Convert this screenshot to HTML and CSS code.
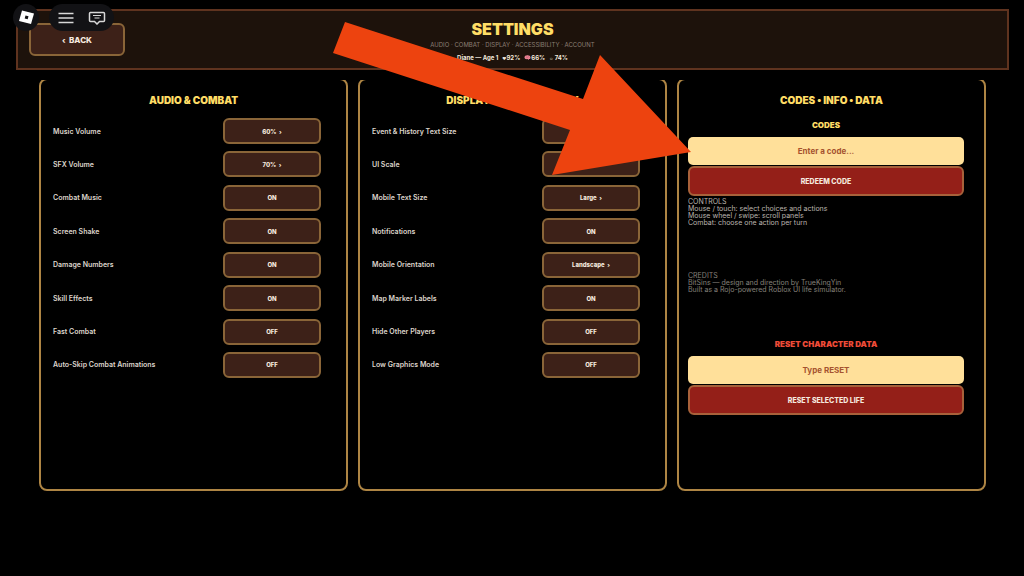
FILE: index.html
```html
<!DOCTYPE html>
<html lang="en">
  <head>
    <meta charset="UTF-8" />
    <meta name="viewport" content="width=device-width, initial-scale=1.0" />
    <title>Settings</title>
    <link rel="stylesheet" href="styles.css">
  </head>
  <body>
    <header class="header">
      <button class="button back" type="button">‹&nbsp; BACK</button>
      <div class="header-text">
        <h1>SETTINGS</h1>
        <p class="subtitle">AUDIO · COMBAT · DISPLAY · ACCESSIBILITY · ACCOUNT</p>
        <p class="status">
          <span>Diane — Age 1</span>
          <span><span class="symbol">♥</span>92%</span>
          <span><svg class="brain" viewBox="0 0 14 10" aria-hidden="true"><path d="M1 5C1 2 3 1 5 1c3-1 8 0 8 4 0 2-1 3-3 3L9 10 7 8C3 9 1 7 1 5z" fill="#f08a9b"/><path d="M3 4c2-1 3 1 4 0s3-1 4 1M4 6c2 0 3-1 5 0" fill="none" stroke="#b94b63"/></svg>66%</span>
          <span><span class="symbol">☺</span> 74%</span>
        </p>
      </div>
    </header>

    <main class="panels">
      <section class="panel">
        <h2>AUDIO &amp; COMBAT</h2>
        <div class="settings">
          <div class="row"><label for="music">Music Volume</label><button class="button" id="music" type="button">60% &nbsp;›</button></div>
          <div class="row"><label for="sfx">SFX Volume</label><button class="button" id="sfx" type="button">70% &nbsp;›</button></div>
          <div class="row"><label for="combatMusic">Combat Music</label><button class="button" id="combatMusic" type="button">ON</button></div>
          <div class="row"><label for="shake">Screen Shake</label><button class="button" id="shake" type="button">ON</button></div>
          <div class="row"><label for="damage">Damage Numbers</label><button class="button" id="damage" type="button">ON</button></div>
          <div class="row"><label for="skill">Skill Effects</label><button class="button" id="skill" type="button">ON</button></div>
          <div class="row"><label for="fast">Fast Combat</label><button class="button" id="fast" type="button">OFF</button></div>
          <div class="row"><label for="autoSkip">Auto-Skip Combat Animations</label><button class="button" id="autoSkip" type="button">OFF</button></div>
        </div>
      </section>

      <section class="panel">
        <h2>DISPLAY &amp; ACCESSIBILITY</h2>
        <div class="settings">
          <div class="row"><label for="textSize">Event &amp; History Text Size</label><button class="button" id="textSize" type="button"></button></div>
          <div class="row"><label for="uiScale">UI Scale</label><button class="button" id="uiScale" type="button"></button></div>
          <div class="row"><label for="mobileText">Mobile Text Size</label><button class="button" id="mobileText" type="button">Large &nbsp;›</button></div>
          <div class="row"><label for="notifications">Notifications</label><button class="button" id="notifications" type="button">ON</button></div>
          <div class="row"><label for="orientation">Mobile Orientation</label><button class="button" id="orientation" type="button">Landscape &nbsp;›</button></div>
          <div class="row"><label for="markers">Map Marker Labels</label><button class="button" id="markers" type="button">ON</button></div>
          <div class="row"><label for="hidePlayers">Hide Other Players</label><button class="button" id="hidePlayers" type="button">OFF</button></div>
          <div class="row"><label for="lowGraphics">Low Graphics Mode</label><button class="button" id="lowGraphics" type="button">OFF</button></div>
        </div>
      </section>

      <section class="panel data">
        <h2>CODES • INFO • DATA</h2>
        <form class="form">
          <h3><label for="code">CODES</label></h3>
          <input type="text" id="code" placeholder="Enter a code..." />
          <button class="button danger" type="button">REDEEM CODE</button>
        </form>
        <div class="info">
          <p>CONTROLS</p>
          <p>Mouse / touch: select choices and actions</p>
          <p>Mouse wheel / swipe: scroll panels</p>
          <p>Combat: choose one action per turn</p>
        </div>
        <div class="info credits">
          <p>CREDITS</p>
          <p>BitSins — design and direction by TrueKingYin</p>
          <p>Built as a Rojo-powered Roblox UI life simulator.</p>
        </div>
        <form class="form">
          <h3 class="warning"><label for="reset">RESET CHARACTER DATA</label></h3>
          <input type="text" id="reset" placeholder="Type RESET" />
          <button class="button danger" type="button">RESET SELECTED LIFE</button>
        </form>
      </section>
    </main>

    <!-- Roblox top bar -->
    <nav class="topbar">
      <button class="logo" type="button" aria-label="Roblox">
        <svg width="26" height="26" viewBox="0 0 26 26"><path d="M9 6.500 21 9.500 18 20 6 17z" fill="#fff"/><path d="M12.500 11.500 15.500 12.200 14.700 15.200 11.700 14.500z" fill="#121215"/></svg>
      </button>
      <div class="menu">
        <button type="button" aria-label="Menu">
          <svg width="18" height="14" viewBox="0 0 18 14"><path d="M1.500 2.500h15M1.500 7h15M1.500 11.500h15" stroke="#d8d8d8" stroke-width="1.300"/></svg>
        </button>
        <button type="button" aria-label="Chat">
          <svg width="18" height="14" viewBox="0 0 18 14"><path d="M2 1.500h13.500q1 0 1 1v7q0 1-1 1H11.500L9 13 6.500 10.500H2.500q-1 0-1-1v-7q0-1 1-1z" fill="none" stroke="#d8d8d8" stroke-width="1.500"/><path d="M5 4.500h8M6.500 7h5" stroke="#d8d8d8" stroke-width="1.200"/></svg>
        </button>
      </div>
    </nav>

    <svg class="arrow" width="360" height="156" viewBox="0 0 360 156" aria-hidden="true">
      <path d="M12 2 250 79 267 35 358 132 219 155 237 110 0 33z" fill="#ed430f"/>
    </svg>
  </body>
</html>
```

FILE: styles.css
```css
* {
  box-sizing: border-box;
}
body {
  margin: 0;
  min-height: 100vh;
  padding: 9px 15px 0 16px;
  background-color: #000;
  color: #ddd5cc;
  font-family: Inter, "Noto Sans", sans-serif;
  font-size: 7px;
  overflow: hidden;
}
h1,
h2,
h3,
p {
  margin: 0;
}
button,
input {
  font-family: inherit;
}
.header {
  display: grid;
  grid-template-columns: 96px 1fr 96px;
  align-items: start;
  height: 61px;
  padding: 12px 11px 0;
  border: 2px solid #5f331f;
  background-color: #1d120b;
}
.header-text {
  text-align: center;
}
h1 {
  color: #ffdd66;
  font-size: 16px;
  font-weight: 900;
  line-height: 12px;
}
.subtitle {
  padding-top: 4px;
  color: #8c7f74;
  font-size: 6px;
  line-height: 12px;
}
.status {
  display: flex;
  justify-content: center;
  gap: 4px;
  color: #f3e8dc;
  font-size: 6px;
  font-weight: 700;
  line-height: 14px;
}
.symbol {
  font-size: 4px;
}
.brain {
  width: 7px;
  height: 5px;
}
.button {
  height: 26px;
  padding: 0;
  border: 2px solid #8a6538;
  border-radius: 6px;
  background-color: #3d2118;
  color: #f5e9df;
  font-size: 6px;
  font-weight: 800;
  cursor: pointer;
}
.button.back {
  height: 33px;
  font-size: 8px;
}
.panels {
  display: grid;
  grid-template-columns: repeat(3, 1fr);
  gap: 10px;
  margin-top: 10px;
  padding: 0 23px;
  overflow: hidden;
}
/* the scroll area cuts off the top edge of each panel */
.panel {
  height: 413px;
  margin-top: -2px;
  padding: 13px 25px 0 12px;
  border: 2px solid #ae8544;
  border-radius: 8px;
}
h2 {
  margin-right: -13px;
  color: #ffdd66;
  font-size: 10px;
  font-weight: 900;
  line-height: 14px;
  text-align: center;
}
.settings {
  display: flex;
  flex-direction: column;
  justify-content: space-between;
  height: 260px;
  margin-top: 11px;
}
.row {
  display: grid;
  grid-template-columns: 1fr 98px;
  align-items: center;
  font-weight: 600;
}
.panel.data {
  padding-right: 20px;
  padding-left: 9px;
}
.form {
  display: flex;
  flex-direction: column;
  gap: 1px;
}
h3 {
  height: 18px;
  color: #ffdd66;
  font-size: 8px;
  font-weight: 900;
  line-height: 14px;
  text-align: center;
}
.data h2 {
  margin-right: -11px;
  margin-bottom: 11px;
}
h3.warning {
  color: #ee4b38;
}
input {
  width: 100%;
  height: 28px;
  border: 0;
  border-radius: 5px;
  background-color: #ffe09a;
  color: #8a3b20;
  font-size: 8px;
  font-weight: 700;
  text-align: center;
}
input::placeholder {
  color: #a5532f;
  opacity: 1;
}
.button.danger {
  height: 30px;
  border-color: #a8613a;
  background-color: #941f18;
  font-size: 7px;
}
.info {
  height: 75px;
  padding-top: 2px;
  color: #bcb5ae;
  line-height: 7px;
}
.info.credits {
  height: 66px;
  padding-top: 1px;
  color: #85807a;
}
.topbar {
  position: absolute;
  top: 4px;
  left: 13px;
  display: flex;
  gap: 10px;
}
.topbar button {
  display: flex;
  padding: 0;
  border: 0;
  background: none;
}
.topbar .logo {
  border-radius: 50%;
  background-color: #121215;
}
.menu {
  display: flex;
  align-items: center;
  gap: 13px;
  height: 27px;
  padding: 0 8px;
  border-radius: 14px;
  background-color: #121215;
}
/* pointer to the code box */
.arrow {
  position: absolute;
  top: 20px;
  left: 333px;
  pointer-events: none;
}
```
